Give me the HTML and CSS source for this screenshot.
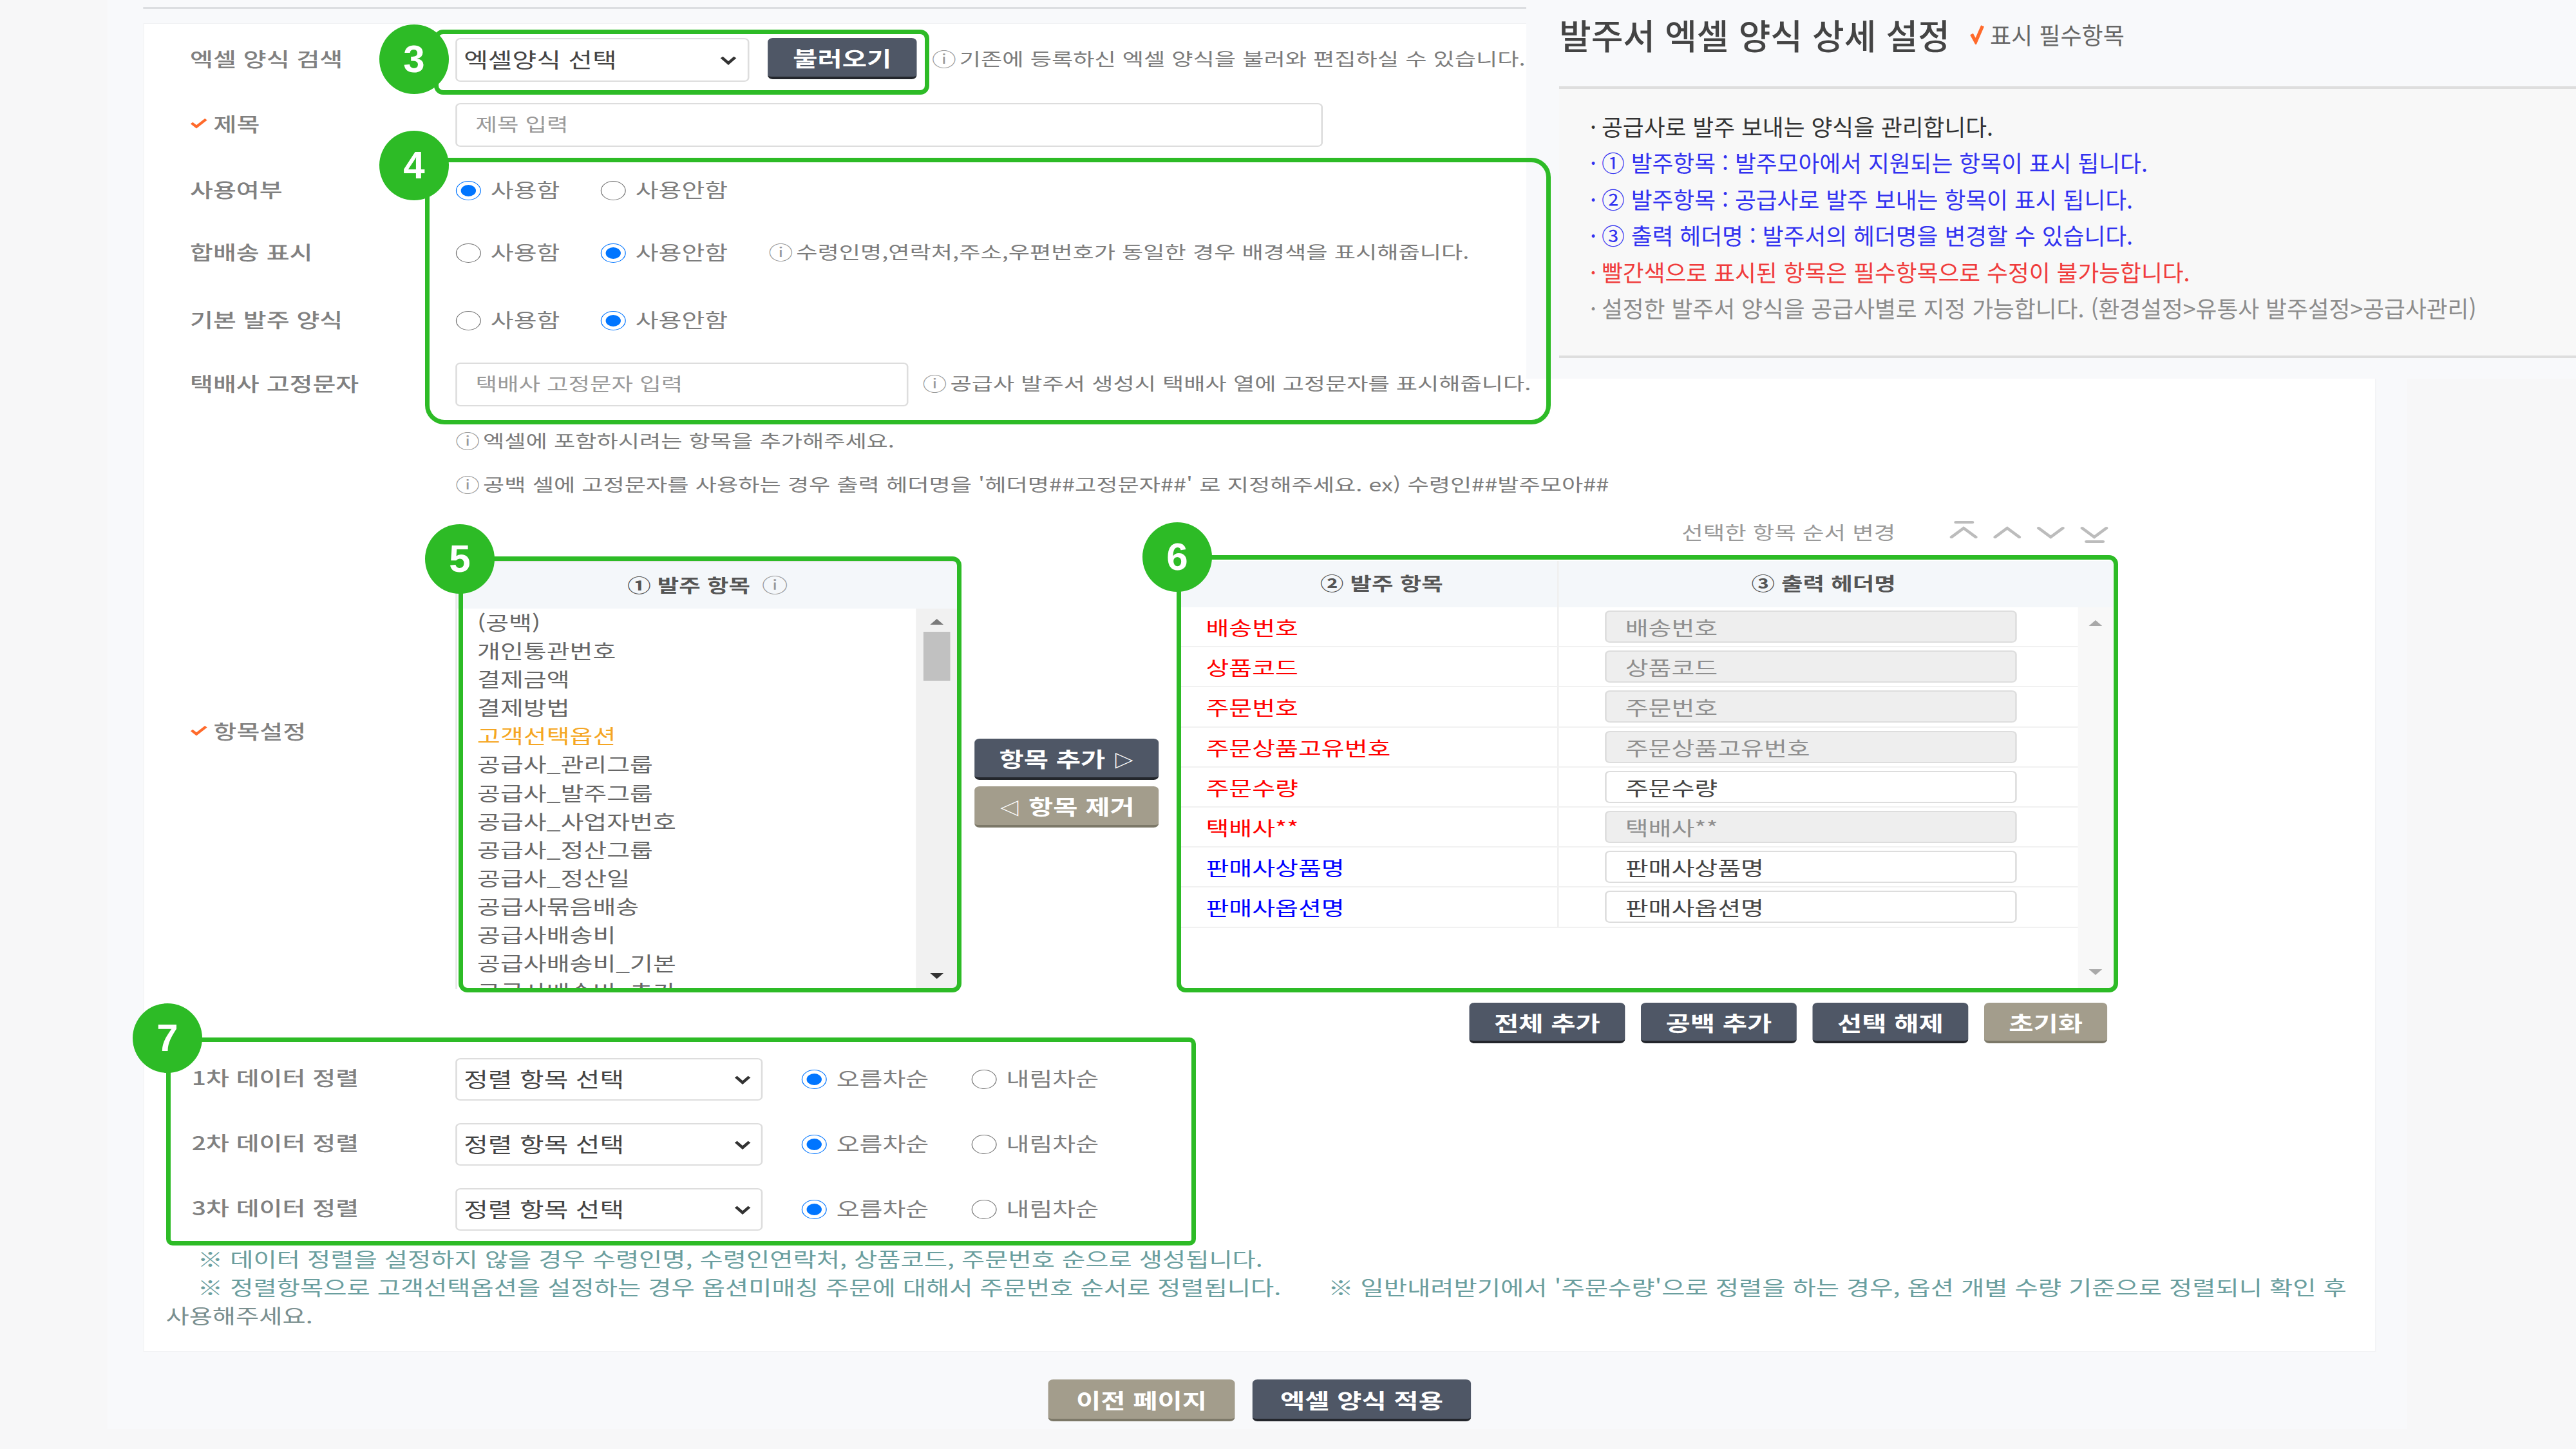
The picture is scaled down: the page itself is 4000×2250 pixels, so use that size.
FILE: index.html
```html
<!DOCTYPE html>
<html lang="ko">
<head>
  <meta charset="UTF-8" />
  <title>발주서 엑셀 양식 상세 설정</title>
  <link rel="stylesheet" href="styles.css">
</head>
<body>
<div class="page">

  <!-- Main form. The capture is stretched sideways, so the whole sheet is too -->
  <div class="sheet">
    <div class="sheet-inner">
      <div class="top-line"></div>
      <div class="card">

        <div class="form-rows">
          <div class="form-row">
            <span class="label">엑셀 양식 검색</span>
            <select class="select select-form"><option>엑셀양식 선택</option></select>
            <button class="btn btn-dark btn-load">불러오기</button>
            <span class="hint hint-load"><span class="hint-icon">ⓘ</span>기존에 등록하신 엑셀 양식을 불러와 편집하실 수 있습니다.</span>
          </div>
          <div class="form-row">
            <span class="label"><svg class="check" viewBox="0 0 22 18"><path d="M2 9 L8 15 L20 3"/></svg>제목</span>
            <input class="input input-title" type="text" placeholder="제목 입력">
          </div>
          <div class="form-row">
            <span class="label">사용여부</span>
            <label class="radio"><input type="radio" name="use" checked>사용함</label>
            <label class="radio"><input type="radio" name="use">사용안함</label>
          </div>
          <div class="form-row">
            <span class="label">합배송 표시</span>
            <label class="radio"><input type="radio" name="merge">사용함</label>
            <label class="radio"><input type="radio" name="merge" checked>사용안함</label>
            <span class="hint"><span class="hint-icon">ⓘ</span>수령인명,연락처,주소,우편번호가 동일한 경우 배경색을 표시해줍니다.</span>
          </div>
          <div class="form-row">
            <span class="label">기본 발주 양식</span>
            <label class="radio"><input type="radio" name="base">사용함</label>
            <label class="radio"><input type="radio" name="base" checked>사용안함</label>
          </div>
          <div class="form-row">
            <span class="label">택배사 고정문자</span>
            <input class="input input-courier" type="text" placeholder="택배사 고정문자 입력">
            <span class="hint hint-courier"><span class="hint-icon">ⓘ</span>공급사 발주서 생성시 택배사 열에 고정문자를 표시해줍니다.</span>
          </div>
        </div>

        <p class="note"><span class="hint-icon">ⓘ</span>엑셀에 포함하시려는 항목을 추가해주세요.</p>
        <p class="note"><span class="hint-icon">ⓘ</span>공백 셀에 고정문자를 사용하는 경우 출력 헤더명을 '헤더명##고정문자##' 로 지정해주세요. ex) 수령인##발주모아##</p>

        <div class="order-bar">
          <span class="order-text">선택한 항목 순서 변경</span>
          <svg class="order-icon" viewBox="0 0 35 36"><path d="M8 3 H28 M3 26 L17.5 12 L32 26"/></svg>
          <svg class="order-icon" viewBox="0 0 35 36"><path d="M3 26 L17.5 12 L32 26"/></svg>
          <svg class="order-icon" viewBox="0 0 35 36"><path d="M3 12 L17.5 26 L32 12"/></svg>
          <svg class="order-icon" viewBox="0 0 35 36"><path d="M3 12 L17.5 26 L32 12 M8 33 H28"/></svg>
        </div>

        <div class="transfer">
          <span class="label label-items"><svg class="check" viewBox="0 0 22 18"><path d="M2 9 L8 15 L20 3"/></svg>항목설정</span>

          <div class="list-box">
            <div class="list-head">① 발주 항목 <span class="head-info">ⓘ</span></div>
            <div class="list-body">
              <ul class="list">
                <li>(공백)</li>
                <li>개인통관번호</li>
                <li>결제금액</li>
                <li>결제방법</li>
                <li class="list-option">고객선택옵션</li>
                <li>공급사_관리그룹</li>
                <li>공급사_발주그룹</li>
                <li>공급사_사업자번호</li>
                <li>공급사_정산그룹</li>
                <li>공급사_정산일</li>
                <li>공급사묶음배송</li>
                <li>공급사배송비</li>
                <li>공급사배송비_기본</li>
                <li>공급사배송비_추가</li>
              </ul>
              <div class="scroll scroll-list">
                <span class="arrow-up"></span>
                <span class="thumb"></span>
                <span class="arrow-down"></span>
              </div>
            </div>
          </div>

          <div class="move-btns">
            <button class="btn btn-dark">항목 추가 <span class="btn-arrow">▷</span></button>
            <button class="btn btn-tan"><span class="btn-arrow">◁</span> 항목 제거</button>
          </div>

          <div class="table-box">
            <div class="table-head">
              <div class="col-name">② 발주 항목</div>
              <div class="col-header">③ 출력 헤더명</div>
            </div>
            <div class="table-body">
              <div class="table-rows">
                <div class="trow"><div class="col-name cell-red">배송번호</div><div class="col-input"><input class="input input-cell" value="배송번호" disabled></div></div>
                <div class="trow"><div class="col-name cell-red">상품코드</div><div class="col-input"><input class="input input-cell" value="상품코드" disabled></div></div>
                <div class="trow"><div class="col-name cell-red">주문번호</div><div class="col-input"><input class="input input-cell" value="주문번호" disabled></div></div>
                <div class="trow"><div class="col-name cell-red">주문상품고유번호</div><div class="col-input"><input class="input input-cell" value="주문상품고유번호" disabled></div></div>
                <div class="trow"><div class="col-name cell-red">주문수량</div><div class="col-input"><input class="input input-cell" value="주문수량"></div></div>
                <div class="trow"><div class="col-name cell-red">택배사**</div><div class="col-input"><input class="input input-cell" value="택배사**" disabled></div></div>
                <div class="trow"><div class="col-name cell-blue">판매사상품명</div><div class="col-input"><input class="input input-cell" value="판매사상품명"></div></div>
                <div class="trow"><div class="col-name cell-blue">판매사옵션명</div><div class="col-input"><input class="input input-cell" value="판매사옵션명"></div></div>
              </div>
              <div class="scroll scroll-table">
                <span class="arrow-up"></span>
                <span class="arrow-down"></span>
              </div>
            </div>
          </div>
        </div>

        <div class="table-btns">
          <button class="btn btn-dark btn-wide">전체 추가</button>
          <button class="btn btn-dark btn-wide">공백 추가</button>
          <button class="btn btn-dark btn-wide">선택 해제</button>
          <button class="btn btn-tan btn-reset">초기화</button>
        </div>

        <div class="sort-rows">
          <div class="sort-row">
            <span class="label">1차 데이터 정렬</span>
            <select class="select select-sort"><option>정렬 항목 선택</option></select>
            <label class="radio radio-sort"><input type="radio" name="s1" checked>오름차순</label>
            <label class="radio"><input type="radio" name="s1">내림차순</label>
          </div>
          <div class="sort-row">
            <span class="label">2차 데이터 정렬</span>
            <select class="select select-sort"><option>정렬 항목 선택</option></select>
            <label class="radio radio-sort"><input type="radio" name="s2" checked>오름차순</label>
            <label class="radio"><input type="radio" name="s2">내림차순</label>
          </div>
          <div class="sort-row">
            <span class="label">3차 데이터 정렬</span>
            <select class="select select-sort"><option>정렬 항목 선택</option></select>
            <label class="radio radio-sort"><input type="radio" name="s3" checked>오름차순</label>
            <label class="radio"><input type="radio" name="s3">내림차순</label>
          </div>
        </div>

        <p class="sort-note">
          <span class="sort-line">※ 데이터 정렬을 설정하지 않을 경우 수령인명, 수령인연락처, 상품코드, 주문번호 순으로 생성됩니다.</span>
          <span class="sort-line">※ 정렬항목으로 고객선택옵션을 설정하는 경우 옵션미매칭 주문에 대해서 주문번호 순서로 정렬됩니다.<span class="sort-gap"></span>※ 일반내려받기에서 '주문수량'으로 정렬을 하는 경우, 옵션 개별 수량 기준으로 정렬되니 확인 후</span>
          <span class="sort-end">사용해주세요.</span>
        </p>
      </div>

      <div class="footer-btns">
        <button class="btn btn-tan btn-prev">이전 페이지</button>
        <button class="btn btn-dark btn-apply">엑셀 양식 적용</button>
      </div>
    </div>
  </div>

  <!-- Guide on the right, not stretched like the sheet -->
  <aside class="guide">
    <div class="guide-title">
      <h1>발주서 엑셀 양식 상세 설정</h1>
      <svg class="guide-check" viewBox="0 0 22 30"><path d="M3 15 L9 26 L19 3"/></svg>
      <span>표시 필수항목</span>
    </div>
    <ul class="guide-list">
      <li class="guide-dark">공급사로 발주 보내는 양식을 관리합니다.</li>
      <li class="guide-blue">① 발주항목 : 발주모아에서 지원되는 항목이 표시 됩니다.</li>
      <li class="guide-blue">② 발주항목 : 공급사로 발주 보내는 항목이 표시 됩니다.</li>
      <li class="guide-blue">③ 출력 헤더명 : 발주서의 헤더명을 변경할 수 있습니다.</li>
      <li class="guide-red">빨간색으로 표시된 항목은 필수항목으로 수정이 불가능합니다.</li>
      <li>설정한 발주서 양식을 공급사별로 지정 가능합니다. (환경설정&gt;유통사 발주설정&gt;공급사관리)</li>
    </ul>
  </aside>

  <!-- Numbered call-outs drawn over the capture -->
  <div class="frame frame-3"></div>
  <div class="frame frame-4"></div>
  <div class="frame frame-5"></div>
  <div class="frame frame-6"></div>
  <div class="frame frame-7"></div>
  <div class="badge badge-3">3</div>
  <div class="badge badge-4">4</div>
  <div class="badge badge-5">5</div>
  <div class="badge badge-6">6</div>
  <div class="badge badge-7">7</div>
</div>
</body>
</html>
```

FILE: styles.css
```css
* {
  box-sizing: border-box;
  margin: 0;
  padding: 0;
}
body {
  font-family: "Noto Sans CJK KR", "Noto Sans", sans-serif;
  font-size: 30px;
  color: #7d7d7d;
  background: #f7f7f8;
}
.page {
  position: relative;
  width: 4000px;
  height: 2250px;
  overflow: hidden;
}

/* Stretched sheet: every x value in here is the reference x / 1.3 */
.sheet {
  width: 3077px;
  padding-left: 128px;
  transform: scaleX(1.3);
  transform-origin: left top;
}
.sheet-inner {
  width: 2747px;
  height: 2219px;
  padding: 11px 38px 0 43px;
  background: #f8f9fb;
}
.top-line {
  height: 3px;
  background: #dcdee1;
  margin-bottom: 22px;
}
.card {
  width: 2667px;
  height: 2063px;
  padding: 5px 313px 0 55px;
  background: #fff;
  border: 1px solid #f1f2f4;
}

/* Form rows */
.form-rows {
  display: grid;
  grid-template-rows: 102px 100px 104px 90px 120px 78px;
}
.form-row,
.sort-row {
  display: flex;
  align-items: center;
}
.label {
  flex: none;
  display: flex;
  align-items: center;
  gap: 7px;
  width: 317px;
  padding-bottom: 7px;
  font-weight: 500;
  color: #808080;
}
.check {
  width: 21px;
  height: 18px;
  fill: none;
  stroke: #ff6a2b;
  stroke-width: 4;
}
.select,
.input {
  font-family: inherit;
  border: 2px solid #ddd;
  border-radius: 6px;
  background: #fff;
  color: #444;
}
.select {
  appearance: none;
  font-size: 31.5px;
  height: 68px;
  padding: 0 0 5px 8px;
  background: #fff url("data:image/svg+xml,%3Csvg xmlns='http://www.w3.org/2000/svg' viewBox='0 0 22 15' preserveAspectRatio='none'%3E%3Cpath d='M3 3 L11 12 L19 3' fill='none' stroke='%23333' stroke-width='4'/%3E%3C/svg%3E") no-repeat right 12px center / 22px 15px;
}
.input {
  font-size: 28px;
  height: 68px;
  padding: 0 0 5px 22px;
}
.input::placeholder {
  color: #9a9a9a;
}
.select-form {
  width: 351px;
}
.input-title {
  width: 1036px;
}
.input-courier {
  width: 541px;
}
.btn-load {
  width: 178px;
  height: 64px;
  margin: 0 0 4px 22px;
}
.hint,
.note {
  display: flex;
  align-items: center;
  font-size: 27.8px;
  color: #7c7c7c;
}
.hint {
  padding-bottom: 6px;
}
.hint-load {
  margin-left: 18px;
}
.hint-courier {
  margin-left: 17px;
}
.hint-icon {
  width: 33px;
  font-size: 29px;
  color: #999;
}
.radio {
  display: flex;
  align-items: center;
  gap: 11px;
  width: 173px;
  padding-bottom: 6px;
}
.radio + .radio {
  width: 201px;
}
.radio input {
  flex: none;
  width: 31px;
  height: 30px;
  margin-top: 6px;
  accent-color: #0075ff;
}

.note {
  position: relative;
  top: -5px;
  height: 32px;
  margin: 36px 0 0 317px;
}
.order-bar {
  display: flex;
  align-items: center;
  justify-content: flex-end;
  gap: 17px;
  height: 36px;
  margin: 36px 0 27px;
  padding-right: 5px;
}
.order-text {
  margin-right: 47px;
  font-size: 28px;
  color: #999;
}
.order-icon {
  width: 35px;
  height: 36px;
  fill: none;
  stroke: #bcbcbc;
  stroke-width: 4;
  stroke-linecap: round;
}

/* Transfer area: list, move buttons, table */
.transfer {
  display: flex;
  height: 665px;
}
.label-items {
  align-self: flex-start;
  height: 36px;
  margin-top: 248px;
}
.list-box {
  width: 603px;
  border: 2px solid #e6e6e6;
  border-bottom: none;
  display: flex;
  flex-direction: column;
}
.list-head {
  flex: none;
  height: 72px;
  line-height: 68px;
  text-align: center;
  font-size: 28px;
  font-weight: 700;
  color: #555;
  background: #f4f7fa;
}
.head-info {
  margin-left: 6px;
  font-size: 31px;
  color: #999;
  font-weight: 400;
}
.list-body {
  flex: 1;
  display: flex;
  min-height: 0;
}
.list {
  flex: 1;
  list-style: none;
  overflow: hidden;
  margin-top: -6px;
  padding: 4px 0 0 24px;
  color: #666;
}
.list li {
  height: 44.1px;
  line-height: 44px;
}
.list-option {
  color: #f5a623;
}
.scroll {
  flex: none;
  position: relative;
  display: flex;
  flex-direction: column;
  align-items: center;
  background: #f1f1f1;
}
.scroll-list {
  width: 50px;
  padding: 16px 0;
}
.thumb {
  width: 32px;
  height: 76px;
  margin-top: 11px;
  background: #c1c1c1;
}
.arrow-up,
.arrow-down {
  width: 0;
  height: 0;
  border-left: 8px solid transparent;
  border-right: 8px solid transparent;
}
.arrow-up {
  border-bottom: 9px solid #7a7a7a;
}
.arrow-down {
  margin-top: auto;
  border-top: 9px solid #333;
}
.move-btns {
  flex: none;
  display: flex;
  flex-direction: column;
  gap: 10px;
  width: 220px;
  margin: 276px 26px 0 18px;
}
.move-btns .btn {
  height: 64px;
}
.btn-arrow {
  font-size: 26px;
}
.table-box {
  width: 1115px;
  display: flex;
  flex-direction: column;
  color: #555;
}
.table-head {
  flex: none;
  display: flex;
  height: 72px;
  line-height: 68px;
  text-align: center;
  font-size: 28px;
  font-weight: 700;
  background: #f4f7fa;
}
.col-name {
  flex: none;
  width: 452px;
  padding-left: 30px;
  border-right: 2px solid #f0f0f0;
}
.col-header {
  flex: 1;
  padding-right: 30px;
}
.table-body {
  flex: 1;
  display: flex;
  min-height: 0;
}
.table-rows {
  flex: 1;
}
.trow {
  display: flex;
  align-items: center;
  height: 62.2px;
  border-bottom: 2px solid #f1f1f1;
}
.trow .col-name {
  height: 100%;
  line-height: 60px;
}
.cell-red {
  color: #f00;
}
.cell-blue {
  color: #00f;
}
.col-input {
  padding-left: 55px;
}
.input-cell {
  width: 492px;
  height: 50px;
  font-size: 30px;
  padding-bottom: 0;
  color: #444;
}
.input-cell:disabled {
  background: #eee;
  color: #8f8f8f;
}
.scroll-table {
  width: 42px;
  padding: 20px 0 22px;
  background: #f8f8f8;
}
.scroll-table .arrow-down {
  border-top-color: #a9a9a9;
}
.scroll-table .arrow-up {
  border-bottom-color: #a9a9a9;
}

/* Buttons */
.btn {
  font-family: inherit;
  font-size: 32px;
  font-weight: 700;
  color: #fff;
  border: none;
  border-radius: 6px;
  white-space: nowrap;
}
.btn-dark {
  background: #4f5766;
  border-bottom: 4px solid #23262c;
}
.btn-tan {
  background: #a39d8c;
  border-bottom: 4px solid #7c7868;
}
.table-btns {
  display: flex;
  justify-content: flex-end;
  gap: 19px;
  height: 63px;
  margin-top: 21px;
  padding-right: 7px;
}
.btn-wide {
  width: 186px;
}
.btn-reset {
  width: 147px;
}

/* Sort rows */
.sort-rows {
  display: flex;
  flex-direction: column;
  gap: 35px;
  margin-top: 23px;
}
.sort-row {
  height: 66px;
}
.sort-row .label {
  padding: 0 0 8px 2px;
}
.select-sort {
  width: 367px;
  height: 66px;
  margin-right: 46px;
  background-position: right 11px center;
}
.sort-row .radio {
  width: 203px;
}
.sort-note {
  margin: 21px -300px 0 -29px;
  font-size: 30.3px;
  line-height: 44px;
  color: #6a9e9e;
}
.sort-line {
  display: block;
  padding-left: 38px;
}
.sort-gap {
  display: inline-block;
  width: 56px;
}
.sort-end {
  display: block;
  color: #7a8f8f;
}

.footer-btns {
  display: flex;
  justify-content: center;
  gap: 21px;
  width: 2667px;
  margin-top: 43px;
}
.footer-btns .btn {
  height: 65px;
}
.btn-prev {
  width: 223px;
}
.btn-apply {
  width: 261px;
}

/* Guide panel */
.guide {
  position: absolute;
  left: 2370px;
  top: 0;
  right: 0;
  height: 588px;
  padding: 0 0 0 51px;
  background: #f8f9fb;
}
.guide-title {
  display: flex;
  align-items: center;
  height: 134px;
  padding-bottom: 28px;
  font-size: 36px;
  color: #666;
}
.guide-title h1 {
  font-size: 54px;
  font-weight: 500;
  color: #444;
  margin-right: 30px;
}
.guide-check {
  width: 24px;
  height: 32px;
  margin-right: 8px;
  fill: none;
  stroke: #ff6a2b;
  stroke-width: 5;
}
.guide-list {
  list-style: none;
  height: 422px;
  padding: 30px 0 0 66px;
  font-size: 35.7px;
  line-height: 56.4px;
  color: #8c8c8c;
  background: #f8f8f8;
  border-top: 4px solid #dedede;
  border-bottom: 4px solid #dedede;
}
.guide-list li::before {
  content: "·";
  display: inline-block;
  width: 18px;
  margin-left: -18px;
}
.guide-dark {
  color: #333;
}
.guide-blue {
  color: #3232f0;
}
.guide-red {
  color: #f03c3c;
}

/* Call-outs, in reference pixels */
.frame {
  position: absolute;
  border: 7px solid #2dbb26;
  border-radius: 14px;
}
.frame-3 {
  left: 674px;
  top: 46px;
  width: 769px;
  height: 101px;
}
.frame-4 {
  left: 660px;
  top: 245px;
  width: 1748px;
  height: 414px;
  border-radius: 30px;
}
.frame-5 {
  left: 712px;
  top: 864px;
  width: 781px;
  height: 677px;
}
.frame-6 {
  left: 1827px;
  top: 862px;
  width: 1462px;
  height: 679px;
}
.frame-7 {
  left: 258px;
  top: 1611px;
  width: 1599px;
  height: 323px;
  border-radius: 10px;
}
.badge {
  position: absolute;
  width: 108px;
  height: 108px;
  border-radius: 50%;
  background: #2dbb26;
  color: #fff;
  font-family: "Liberation Sans", sans-serif;
  font-weight: 700;
  font-size: 60px;
  line-height: 108px;
  text-align: center;
}
.badge-3 { left: 589px; top: 38px; }
.badge-4 { left: 589px; top: 203px; }
.badge-5 { left: 660px; top: 814px; }
.badge-6 { left: 1774px; top: 811px; }
.badge-7 { left: 206px; top: 1558px; }
```
